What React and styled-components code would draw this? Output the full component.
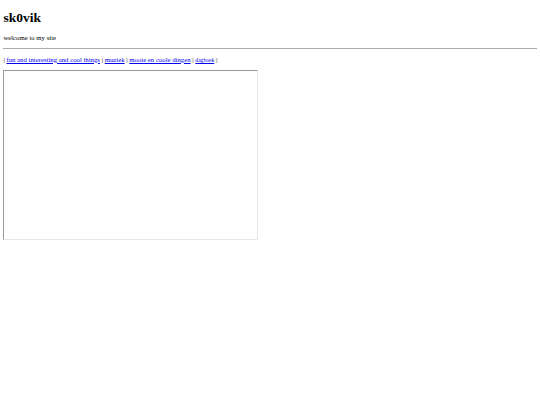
import React from "react";
import styled, { createGlobalStyle } from "styled-components";

const Global = createGlobalStyle`
  html, body { background: #fff; }
  body {
    margin: 0 3.375px 3.375px;
    font-family: "Liberation Serif", "Times New Roman", serif;
    color: #000;
  }
`;

const Title = styled.h1`
  font-size: 13.5px;
  font-weight: bold;
  margin: 9.6px 0 8.7px;
  line-height: normal;
`;

const Para = styled.p`
  font-size: 6.75px;
  margin: 6.75px 0;
  line-height: normal;
`;

const Rule = styled.hr`
  margin: 3.375px 0;
  border: 0;
  border-top: 1px solid #a9a9a9;
  height: 0;
`;

const Nav = styled.p`
  font-size: 6.75px;
  margin: 6.75px 0;
  line-height: normal;
  white-space: nowrap;
`;

const NavLink = styled.a`
  color: #0000ee;
  text-decoration: underline;
  font-size: ${(p) => (p.$small ? "5.6px" : "inherit")};
`;

const Frame = styled.div`
  box-sizing: border-box;
  width: 254.8px;
  height: 170.4px;
  background: #fff;
  border-style: solid;
  border-width: 1px;
  border-color: #9a9a9a #e6e6e6 #e6e6e6 #9a9a9a;
`;

const links = [
  { label: "fun and interesting and cool things" },
  { label: "muziek" },
  { label: "mooie en coole dingen" },
  { label: "dagboek", small: true },
];

export default function App() {
  return (
    <>
      <Global />
      <Title>sk0vik</Title>
      <Para>welcome to my site</Para>
      <Rule />
      <Nav>
        |{" "}
        {links.map((l) => (
          <React.Fragment key={l.label}>
            <NavLink href="#" $small={l.small}>
              {l.label}
            </NavLink>{" "}
            |{" "}
          </React.Fragment>
        ))}
      </Nav>
      <Frame />
    </>
  );
}
